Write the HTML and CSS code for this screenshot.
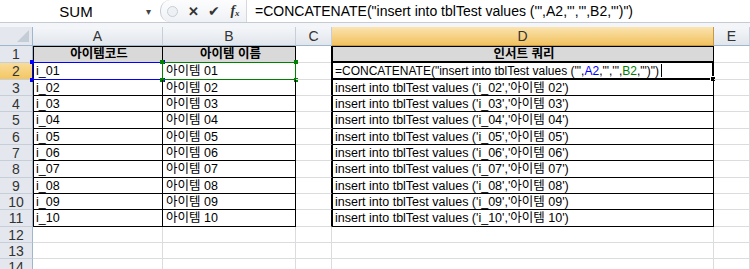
FILE: index.html
```html
<!DOCTYPE html>
<html lang="ko">
<head>
  <meta charset="UTF-8" />
  <title>Excel - CONCATENATE</title>
  <link rel="stylesheet" href="styles.css">
</head>
<body>
  <div class="fbar">
    <div class="namebox">
      <span class="name">SUM</span>
      <span class="drop">&#9662;</span>
    </div>
    <div class="fbtns">
      <span class="knob"></span>
      <span class="btn x">&#10005;</span>
      <span class="btn ok">&#10004;</span>
      <span class="btn fx">f<sub>x</sub></span>
    </div>
    <div class="finput">=CONCATENATE("insert into tblTest values ('",A2,"','",B2,"')")</div>
  </div>
  <div class="gap"></div>

  <div class="sheet" id="sheet">
    <div class="corner"><span class="tri"></span></div>
    <div class="colh">A</div>
    <div class="colh">B</div>
    <div class="colh">C</div>
    <div class="colh sel">D</div>
    <div class="colh">E</div>
  </div>

  <script>
    var sheet = document.getElementById('sheet');
    var q = "insert into tblTest values ('";

    function cell(cls, html) {
      var d = document.createElement('div');
      d.className = 'cell ' + cls;
      d.innerHTML = html || '';
      sheet.appendChild(d);
      return d;
    }

    for (var r = 1; r <= 14; r++) {
      var rh = document.createElement('div');
      rh.className = 'rowh' + (r == 2 ? ' sel' : '');
      rh.textContent = r;
      sheet.appendChild(rh);

      if (r == 1) {
        cell('t tl tt head', '아이템코드');
        cell('t tt head', '아이템 이름');
        cell('tr', '');
        cell('t tl tt head', '인서트 쿼리');
        cell('', '');
        continue;
      }
      if (r <= 11) {
        var n = (r - 1 < 10 ? '0' : '') + (r - 1);
        var a = cell('t tl', 'i_' + n);
        var b = cell('t', '아이템 ' + n);
        cell('tr', '');
        if (r == 2) {
          a.innerHTML += '<span class="ref blue"><i class="c1"></i><i class="c2"></i><i class="c3"></i><i class="c4"></i></span>';
          b.innerHTML += '<span class="ref green"><i class="c1"></i><i class="c2"></i><i class="c3"></i><i class="c4"></i></span>';
          cell('t tl edit', '=CONCATENATE("insert into tblTest values (\'",<span class="rb">A2</span>,"\',\'",<span class="rg">B2</span>,"\')")<span class="caret"></span><span class="act"><i class="fill"></i></span>');
        } else {
          cell('t tl', q + 'i_' + n + "','아이템 " + n + "')");
        }
        cell('', '');
        continue;
      }
      cell('', ''); cell('', ''); cell('', ''); cell('', ''); cell('', '');
    }
  </script>
</body>
</html>
```

FILE: styles.css
```css
body {
  margin: 0;
  width: 750px;
  height: 269px;
  overflow: hidden;
  background: #fff;
  font-family: "Liberation Sans", "Noto Sans CJK KR", sans-serif;
  color: #000;
}

/* formula bar */
.fbar {
  display: flex;
  height: 22px;
  border-bottom: 1px solid #c5cbd3;
  background: #fff;
}
.namebox {
  width: 160px;
  display: flex;
  align-items: center;
}
.name {
  flex: 1;
  text-align: center;
  font-size: 15px;
  padding-left: 6px;
}
.drop {
  font-size: 10px;
  color: #444;
  width: 14px;
}
.fbtns {
  width: 86px;
  display: flex;
  align-items: center;
  gap: 9px;
  padding-left: 6px;
  box-sizing: border-box;
  border-left: 1px solid #c5cbd3;
  border-radius: 10px 0 0 10px;
  background: linear-gradient(#fdfdfe, #eef1f5);
}
.knob {
  width: 9px;
  height: 9px;
  border-radius: 50%;
  border: 1px solid #c8ced6;
  background: #eef1f4;
}
.btn {
  font-size: 14px;
  color: #333;
  width: 12px;
  text-align: center;
}
.x {
  font-weight: bold;
  font-size: 13px;
}
.fx {
  font-family: "Liberation Serif", serif;
  font-style: italic;
  font-weight: bold;
  font-size: 14px;
}
.fx sub {
  font-size: 9px;
  vertical-align: -1px;
}
.finput {
  flex: 1;
  border-left: 1px solid #d5d9de;
  font-size: 14px;
  line-height: 22px;
  padding-left: 8px;
  white-space: nowrap;
  overflow: hidden;
}
.gap {
  height: 4px;
  background: #f3f5f8;
}

/* sheet grid */
.sheet {
  display: grid;
  grid-template-columns: 33px 130px 133px 36px 382px 1fr;
  grid-template-rows: 19px 17px 17px 16px 16px 17px 16px 16px 17px 16px 16px 17px 16px 16px 16px;
}
.corner {
  background: #e4e8ee;
  border-right: 1px solid #9eb6ce;
  border-bottom: 1px solid #9eb6ce;
  position: relative;
}
.tri {
  position: absolute;
  right: 3px;
  bottom: 3px;
  width: 0;
  height: 0;
  border-left: 12px solid transparent;
  border-bottom: 12px solid #c4ccd6;
}
.colh {
  background: linear-gradient(#f4f6f9, #e1e6ec);
  border-right: 1px solid #c6ced8;
  border-bottom: 1px solid #9eb6ce;
  text-align: center;
  font-size: 14px;
  line-height: 19px;
  color: #333;
}
.colh.sel {
  background: linear-gradient(#fae4b0, #f1c15f);
  border-bottom-color: #c29a4a;
  border-right-color: #c29a4a;
}
.rowh {
  background: #e4e8ee;
  border-right: 1px solid #9eb6ce;
  border-bottom: 1px solid #c6ced8;
  text-align: center;
  font-size: 14px;
  line-height: 16px;
  color: #333;
  box-sizing: border-box;
}
.rowh.sel {
  background: linear-gradient(#f9dc9a, #f3c662);
  border-right-color: #c29a4a;
}
.cell {
  border-right: 1px solid #dadcdd;
  border-bottom: 1px solid #dadcdd;
  font-size: 12.5px;
  line-height: 16px;
  padding-left: 3px;
  white-space: nowrap;
  position: relative;
  box-sizing: border-box;
}
.cell.t {
  border-right-color: #000;
  border-bottom-color: #000;
}
.cell.tr {
  border-right-color: #000;
}
.cell.tl {
  box-shadow: inset 1px 0 #000;
}
.cell.tt {
  box-shadow: inset 0 1px #000;
}
.cell.tl.tt {
  box-shadow: inset 1px 1px #000;
}
.cell.head {
  background: #d9d9d9;
  font-weight: bold;
  text-align: center;
}
.cell.edit {
  font-size: 12px;
}
.rb { color: #0000ff; }
.rg { color: #008000; }
.caret {
  display: inline-block;
  width: 1px;
  height: 13px;
  background: #000;
  vertical-align: -2px;
  margin-left: 2px;
}

/* reference highlights */
.ref, .act {
  position: absolute;
  left: -1px;
  top: -1px;
  right: -1px;
  bottom: -1px;
}
.ref.blue { border: 1px solid #0000ff; }
.ref.green { border: 1px solid #008000; }
.ref i {
  position: absolute;
  width: 4px;
  height: 4px;
}
.ref.blue i { background: #0000ff; }
.ref.green i { background: #008000; }
.c1 { left: -3px; top: -3px; }
.c2 { right: -3px; top: -3px; }
.c3 { left: -3px; bottom: -3px; }
.c4 { right: -3px; bottom: -3px; }
.act {
  border: 2px solid #000;
  left: -1px;
  top: -2px;
}
.fill {
  position: absolute;
  right: -4px;
  bottom: -4px;
  width: 4px;
  height: 4px;
  background: #000;
  border: 1px solid #fff;
}
```
